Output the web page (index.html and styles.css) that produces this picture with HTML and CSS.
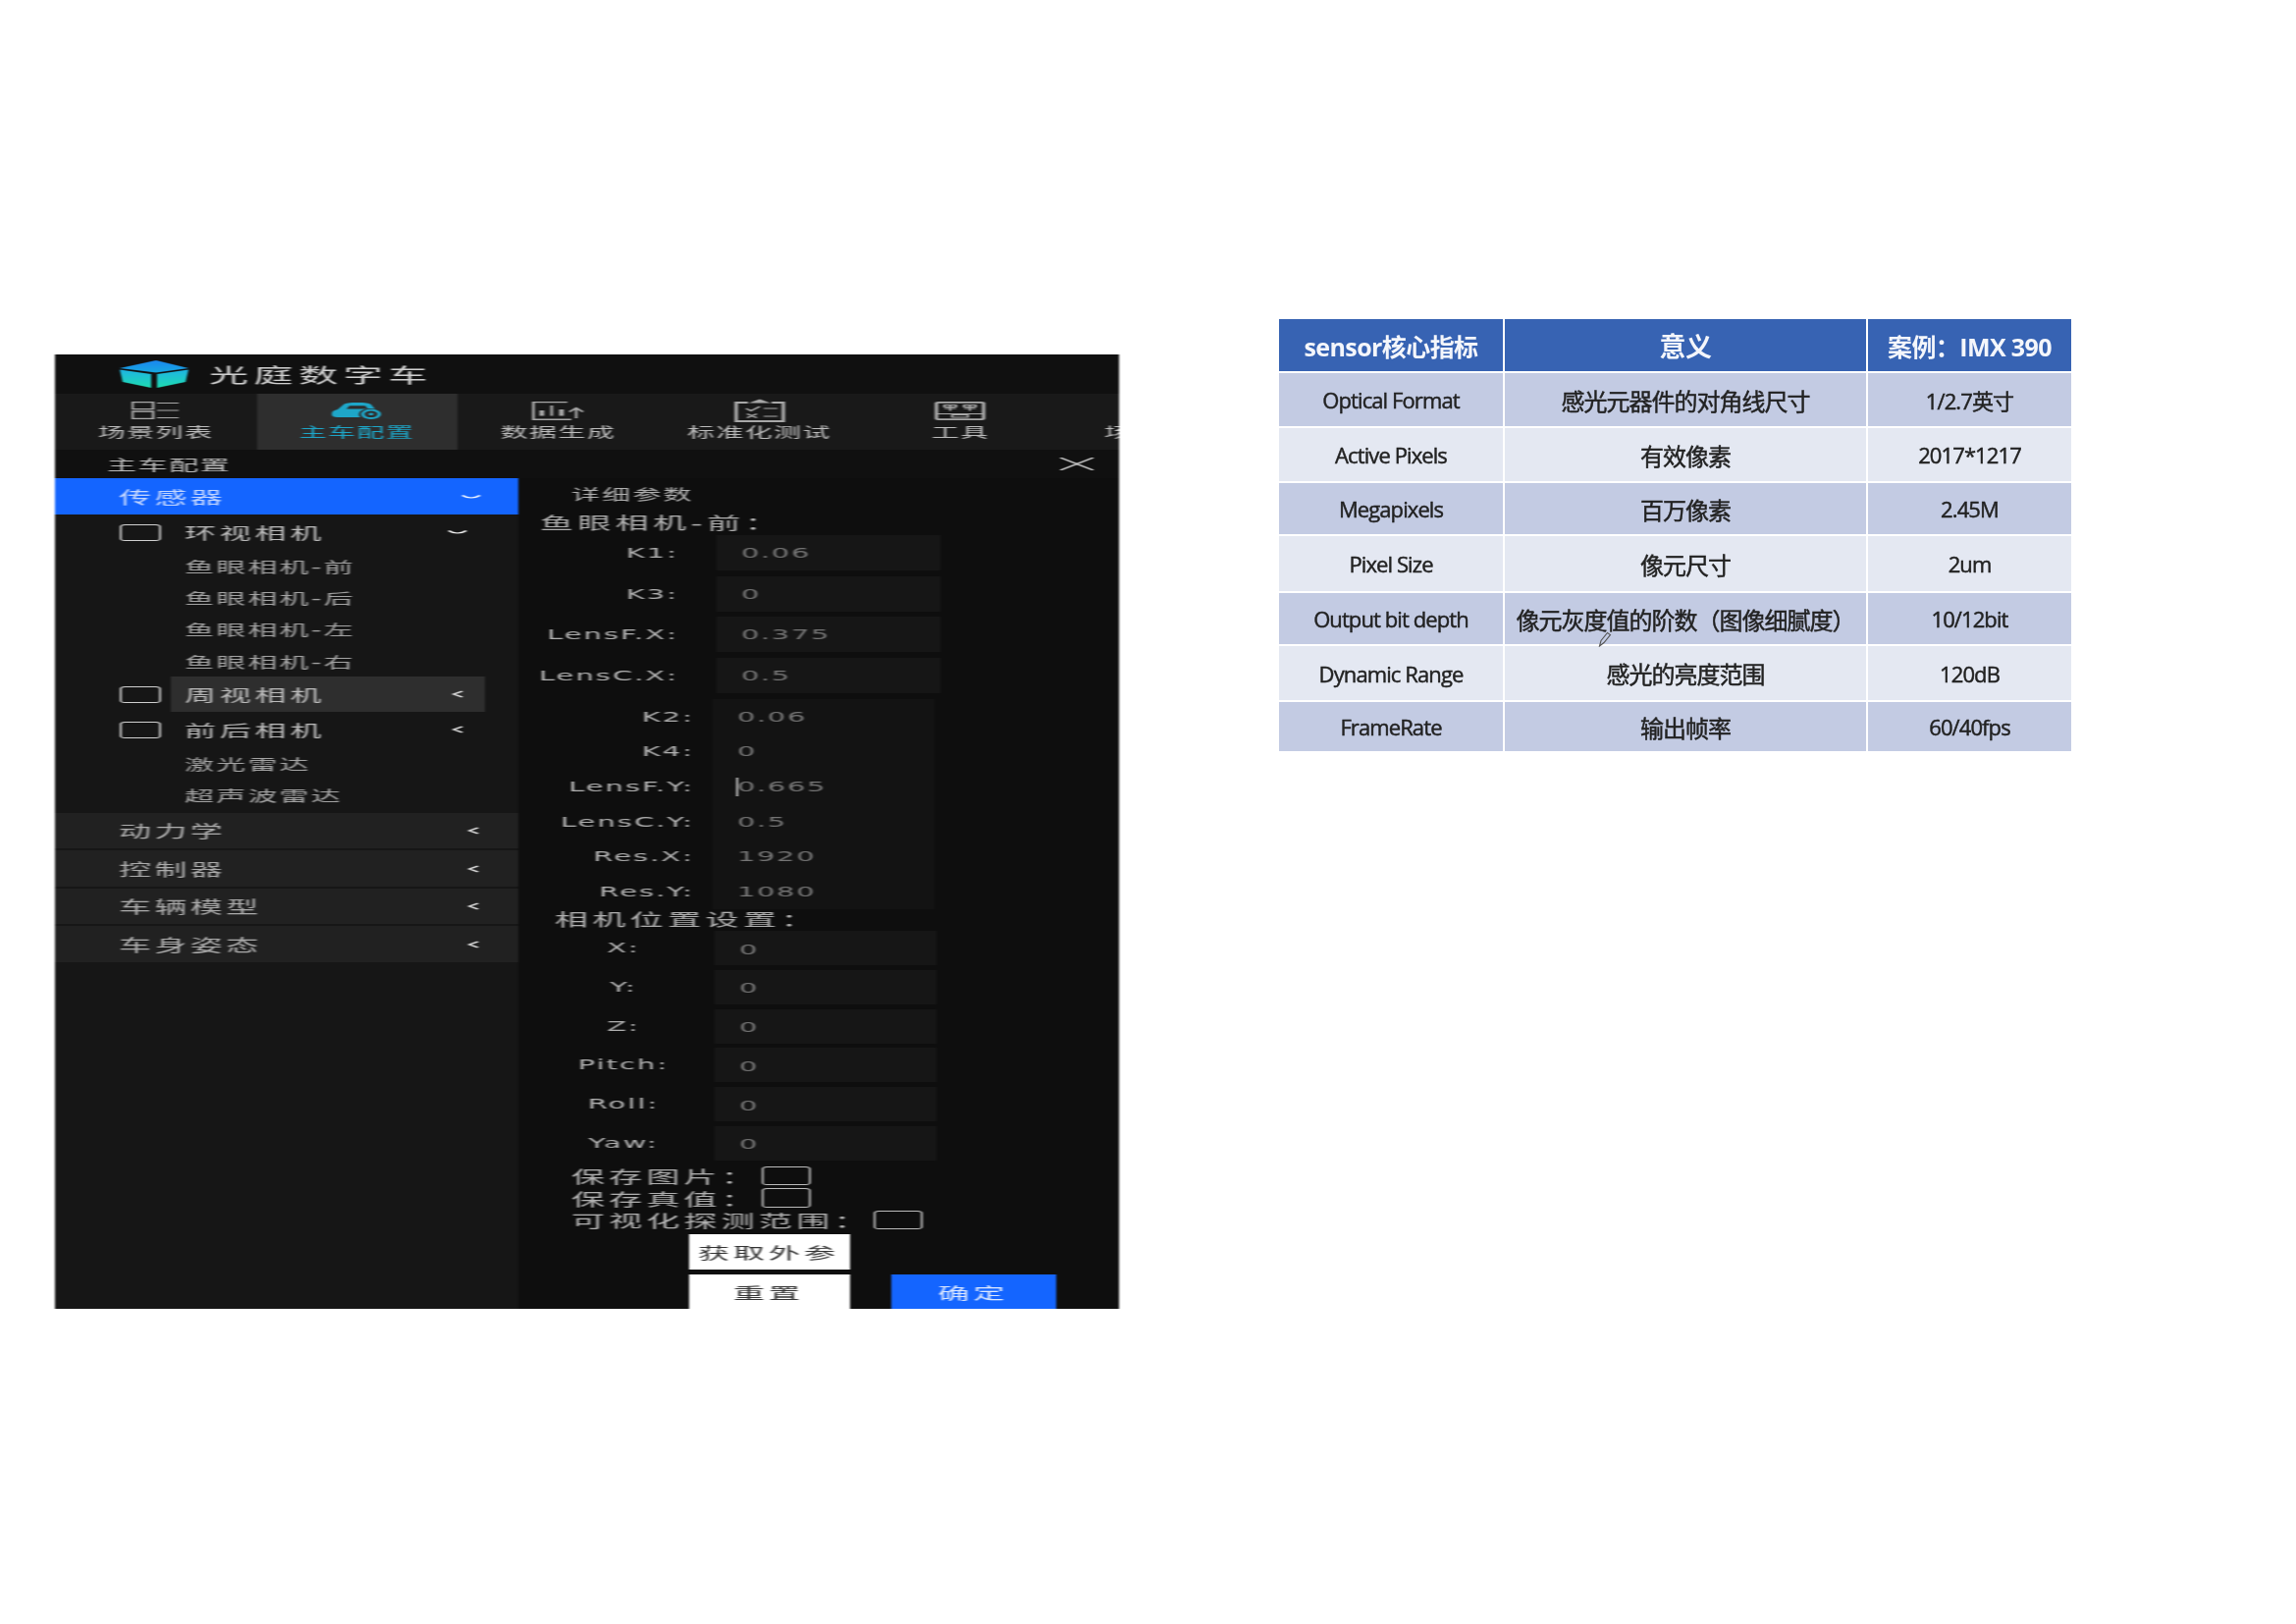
FILE: index.html
```html
<!DOCTYPE html>
<html lang="zh">
<head>
<meta charset="utf-8">
<title>光庭数字车</title>
<link rel="stylesheet" href="styles.css">
</head>
<body>
<div class="page">
  <div class="app-frame">
    <div class="app">
      <header class="title-bar">
        <svg class="logo" viewBox="0 0 35 28">
          <defs>
            <linearGradient id="tg" x1="0" y1="0" x2="0" y2="1"><stop offset="0" stop-color="#1eb4e4"/><stop offset="1" stop-color="#1edcb0"/></linearGradient>
            <linearGradient id="tt" x1="0" y1="0" x2="0" y2="1"><stop offset="0" stop-color="#1a86f0"/><stop offset="1" stop-color="#18a8e0"/></linearGradient>
          </defs>
          <path d="M18.500 0L35 8 18.500 12.500 0 8Z" fill="url(#tt)"/>
          <path d="M0 9.500L16 14V28L1.500 22Z" fill="url(#tg)"/>
          <path d="M19 14L35 9.500 33.500 22 19 28Z" fill="url(#tg)"/>
        </svg>
        <span class="app-name">光庭数字车</span>
      </header>
      <nav class="nav">
        <div class="tab">
          <div class="tab-icon"><svg class="icon-list" viewBox="0 0 24 18" fill="none" stroke="#a8a8a8"><path d="M.5.5h10.500v7.200H.5zM.5 10h10.500v7.500H.5z" stroke-width="1.300"/><path d="M13 1.500h11M13 9h11M13 16.500h11"/></svg></div>
          <span class="tab-label">场景列表</span>
        </div>
        <div class="tab tab-active">
          <div class="tab-icon"><svg class="icon-car" viewBox="0 0 25 17"><path d="M0 12c0-3 1-4 3-5l3-5C7 .5 9 0 13 0s6 .5 7 2l2 4.500A6 6 0 0 0 14.500 15H3c-2 0-3-1-3-3z" fill="#1ea6c8"/><path d="M7.500 6.500L9 3.300h8l1.500 3.200z" fill="#2e2e2e"/><circle cx="20" cy="11.800" r="4.200" fill="#2e2e2e" stroke="#1ea6c8" stroke-width="1.800"/><circle cx="20" cy="11.800" r="1.300" fill="#1ea6c8"/></svg></div>
          <span class="tab-label">主车配置</span>
        </div>
        <div class="tab">
          <div class="tab-icon"><svg class="icon-chart" viewBox="0 0 27 19" fill="none" stroke="#a8a8a8"><path d="M18 .5H.7v17.800H20" stroke-width="1.400"/><path d="M5 14.500V9M15 14.500V8" stroke-width="2.400"/><path d="M10 14.500V4" stroke-width="1.400"/><path d="M22.500 17V7M19 10.500L22.500 6.500 26 10.500" stroke-width="1.300"/></svg></div>
          <span class="tab-label">数据生成</span>
        </div>
        <div class="tab">
          <div class="tab-icon"><svg class="icon-clip" viewBox="0 0 26 24" fill="none" stroke="#a8a8a8"><path d="M7 4H1v19h24V4h-6" stroke-width="1.800"/><path d="M9 4l4-3 4 3z" fill="#a8a8a8"/><path d="M6 10l2.500 2.500L13 8M15 10h7M6.500 15.500l5 4M11.500 15.500l-5 4M15 18h7" stroke-width="1.100"/></svg></div>
          <span class="tab-label">标准化测试</span>
        </div>
        <div class="tab">
          <div class="tab-icon"><svg class="icon-tool" viewBox="0 0 26 19" fill="none" stroke="#a8a8a8"><rect x="1" y=".9" width="24" height="17.200" rx="1" stroke-width="1.800"/><path d="M1 12.500h24M9 13.500h8v2.500H9z" stroke-width="1.100"/><path d="M5 3.500h6v2H5zM5 7h6M8 3.500v6M15 3.500h6v2h-6zM15 7h6M18 3.500v6" stroke-width="1.100"/></svg></div>
          <span class="tab-label">工具</span>
        </div>
        <div class="tab">
          <div class="tab-icon"></div>
          <span class="tab-label">场景列表</span>
        </div>
      </nav>
      <div class="sub-header">
        <span>主车配置</span>
        <svg class="close" viewBox="0 0 17 13" fill="none" stroke="#d8d8d8" stroke-width="1.200"><path d="M0 0l17 13M17 0L0 13"/></svg>
      </div>
      <div class="main">
        <aside class="sidebar">
          <div class="head-row"><span>传感器</span><svg class="chev-down" viewBox="0 0 10 4" fill="none" stroke="#fff" stroke-width="1.200"><path d="M.5.500Q5 5.500 9.500.500"/></svg></div>
          <div class="sensor-row">
            <span class="box"></span>
            <div class="sensor-name sensor-open"><span>环视相机</span><svg class="chev-down" viewBox="0 0 10 4" fill="none" stroke="#fff" stroke-width="1.200"><path d="M.5.500Q5 5.500 9.500.500"/></svg></div>
          </div>
          <div class="leaf">鱼眼相机-前</div>
          <div class="leaf">鱼眼相机-后</div>
          <div class="leaf">鱼眼相机-左</div>
          <div class="leaf">鱼眼相机-右</div>
          <div class="sensor-row">
            <span class="box"></span>
            <div class="sensor-name sensor-hover"><span>周视相机</span><svg class="chev-left" viewBox="0 0 6 8" fill="none" stroke="#eee" stroke-width="1.300"><path d="M5.500 1L1 4l4.500 3"/></svg></div>
          </div>
          <div class="sensor-row">
            <span class="box"></span>
            <div class="sensor-name"><span>前后相机</span><svg class="chev-left" viewBox="0 0 6 8" fill="none" stroke="#eee" stroke-width="1.300"><path d="M5.500 1L1 4l4.500 3"/></svg></div>
          </div>
          <div class="leaf">激光雷达</div>
          <div class="leaf">超声波雷达</div>
          <div class="groups">
            <div class="group"><span>动力学</span><svg class="chev-left" viewBox="0 0 6 8" fill="none" stroke="#eee" stroke-width="1.300"><path d="M5.500 1L1 4l4.500 3"/></svg></div>
            <div class="group"><span>控制器</span><svg class="chev-left" viewBox="0 0 6 8" fill="none" stroke="#eee" stroke-width="1.300"><path d="M5.500 1L1 4l4.500 3"/></svg></div>
            <div class="group"><span>车辆模型</span><svg class="chev-left" viewBox="0 0 6 8" fill="none" stroke="#eee" stroke-width="1.300"><path d="M5.500 1L1 4l4.500 3"/></svg></div>
            <div class="group"><span>车身姿态</span><svg class="chev-left" viewBox="0 0 6 8" fill="none" stroke="#eee" stroke-width="1.300"><path d="M5.500 1L1 4l4.500 3"/></svg></div>
          </div>
        </aside>
        <section class="panel">
          <div class="panel-title">详细参数</div>
          <div class="section-title">鱼眼相机-前：</div>
          <div class="fields-a">
            <div class="field"><label>K1:</label><div class="input">0.06</div></div>
            <div class="field"><label>K3:</label><div class="input">0</div></div>
            <div class="field"><label>LensF.X:</label><div class="input">0.375</div></div>
            <div class="field"><label>LensC.X:</label><div class="input">0.5</div></div>
          </div>
          <div class="fields-b">
            <div class="field"><label>K2:</label><div class="value">0.06</div></div>
            <div class="field"><label>K4:</label><div class="value">0</div></div>
            <div class="field"><label>LensF.Y:</label><div class="value value-caret">0.665</div></div>
            <div class="field"><label>LensC.Y:</label><div class="value">0.5</div></div>
            <div class="field"><label>Res.X:</label><div class="value">1920</div></div>
            <div class="field"><label>Res.Y:</label><div class="value">1080</div></div>
          </div>
          <div class="section-title section-pos">相机位置设置：</div>
          <div class="fields-c">
            <div class="field"><label>X:</label><div class="input">0</div></div>
            <div class="field"><label>Y:</label><div class="input">0</div></div>
            <div class="field"><label>Z:</label><div class="input">0</div></div>
            <div class="field"><label>Pitch:</label><div class="input">0</div></div>
            <div class="field"><label>Roll:</label><div class="input">0</div></div>
            <div class="field"><label>Yaw:</label><div class="input">0</div></div>
          </div>
          <div class="checks">
            <div class="check"><span>保存图片：</span><span class="box box-check"></span></div>
            <div class="check"><span>保存真值：</span><span class="box box-check"></span></div>
            <div class="check"><span>可视化探测范围：</span><span class="box box-check"></span></div>
          </div>
          <div class="actions">
            <div class="btn btn-wide">获取外参</div>
            <div class="action-row">
              <div class="btn">重置</div>
              <div class="btn btn-primary">确定</div>
            </div>
          </div>
        </section>
      </div>
    </div>
  </div>
  <div class="table-wrap">
    <div class="spec-table">
      <div class="cell head">sensor核心指标</div><div class="cell head head-big">意义</div><div class="cell head">案例：IMX 390</div>
      <div class="cell odd">Optical Format</div><div class="cell odd cjk">感光元器件的对角线尺寸</div><div class="cell odd">1/2.7英寸</div>
      <div class="cell even">Active Pixels</div><div class="cell even cjk">有效像素</div><div class="cell even">2017*1217</div>
      <div class="cell odd">Megapixels</div><div class="cell odd cjk">百万像素</div><div class="cell odd">2.45M</div>
      <div class="cell even">Pixel Size</div><div class="cell even cjk">像元尺寸</div><div class="cell even">2um</div>
      <div class="cell odd">Output bit depth</div><div class="cell odd cjk">像元灰度值的阶数（图像细腻度）</div><div class="cell odd">10/12bit</div>
      <div class="cell even">Dynamic Range</div><div class="cell even cjk">感光的亮度范围</div><div class="cell even">120dB</div>
      <div class="cell odd">FrameRate</div><div class="cell odd cjk">输出帧率</div><div class="cell odd">60/40fps</div>
    </div>
    <svg class="pen" viewBox="0 0 14 16" fill="none" stroke="#555" stroke-width="1.100"><path d="M1.500 15L3 9.500 9.500 1.500 12.500 3.500 6 11.500Z"/></svg>
  </div>
</div>
</body>
</html>
```

FILE: styles.css
```css
* { box-sizing: border-box; }
html, body { margin: 0; padding: 0; background: #fff; }

.page {
  display: flex;
  align-items: flex-start;
  width: 2339px;
  height: 1654px;
  padding: 325px 0 0 56px;
  gap: 163px;
  overflow: hidden;
}

/* The app capture is stretched to twice its width, so it is laid out at half width. */
.app-frame { width: 1084px; height: 972px; margin-top: 36px; flex: none; }
.app {
  width: 542px;
  height: 972px;
  display: flex;
  flex-direction: column;
  overflow: hidden;
  transform: scaleX(2);
  transform-origin: left top;
  filter: blur(.55px);
  background: #101010;
  color: #bcbcbc;
  font-family: "DejaVu Sans", "Noto Sans CJK SC", sans-serif;
}

.title-bar { height: 40px; display: flex; align-items: center; padding-left: 32.5px; flex: none; }
.logo { width: 35px; height: 28px; margin-right: 11px; }
.app-name { font-size: 20px; letter-spacing: 2.800px; color: #d0d0d0; }

.nav { height: 57px; display: flex; background: #191919; flex: none; }
.tab { width: 102.5px; flex: none; display: flex; flex-direction: column; align-items: center; }
.tab-active { background: #2e2e2e; color: #1ea6c8; }
.tab-icon { height: 30px; display: flex; align-items: center; justify-content: center; padding-top: 4px; }
.tab-label { font-size: 14px; letter-spacing: .7px; line-height: 18px; white-space: nowrap; }
.icon-list { width: 24px; height: 18px; }
.icon-car { width: 25px; height: 17px; }
.icon-chart { width: 27px; height: 19px; }
.icon-clip { width: 26px; height: 24px; }
.icon-tool { width: 26px; height: 19px; }

.sub-header {
  height: 29px;
  flex: none;
  display: flex;
  align-items: center;
  justify-content: space-between;
  padding: 0 13.5px 0 26.5px;
  font-size: 15px;
  letter-spacing: .8px;
}
.close { width: 17px; height: 13px; }

.main { flex: 1; display: flex; min-height: 0; }

.sidebar { width: 236px; flex: none; background: #161616; }
.head-row {
  height: 37px;
  display: flex;
  align-items: center;
  justify-content: space-between;
  padding: 0 19px 0 32.5px;
  background: #1465ff;
  color: #c6d8ff;
  font-size: 16.500px;
  letter-spacing: 1.700px;
}
.chev-down { width: 10px; height: 4px; }
.chev-left { width: 6px; height: 8px; }

.sensor-row { height: 36px; display: flex; align-items: center; padding-left: 32.5px; font-size: 16px; letter-spacing: 1.900px; }
.box { display: block; width: 21px; height: 17px; border: 1.200px solid #d0d0d0; border-radius: 2.500px; flex: none; }
.sensor-name {
  width: 160px;
  height: 36px;
  margin-left: 5.500px;
  display: flex;
  align-items: center;
  justify-content: space-between;
  padding: 0 11px 0 7px;
}
.sensor-open { padding-right: 9px; }
.sensor-hover { background: #2e2e2e; }
.leaf { height: 32.300px; display: flex; align-items: center; padding-left: 66px; font-size: 15px; letter-spacing: 1.100px; color: #a4a4a4; }

.groups { margin-top: 2px; display: flex; flex-direction: column; gap: 2px; }
.group {
  height: 36.500px;
  display: flex;
  align-items: center;
  justify-content: space-between;
  padding: 0 20px 0 32.500px;
  background: #212121;
  font-size: 16.500px;
  letter-spacing: 1.700px;
  color: #acacac;
}

.panel { flex: 1; background: #0e0e0e; display: flex; flex-direction: column; color: #b0b0b0; }
.panel-title { height: 30px; display: flex; align-items: center; padding-left: 27px; font-size: 14.500px; letter-spacing: 1.100px; flex: none; }
.section-title { height: 28px; display: flex; align-items: center; padding-left: 11px; font-size: 17px; letter-spacing: 2.200px; flex: none; }
.section-pos { height: 22px; padding: 0 0 4px 18.500px; }

.field { display: flex; align-items: center; }
.field label { font-size: 14.500px; letter-spacing: 1px; white-space: nowrap; }
.input { background: #161616; color: #757575; font-size: 14.500px; letter-spacing: .8px; display: flex; align-items: center; padding-left: 12.500px; }

.fields-a { display: flex; flex-direction: column; gap: 5.500px; flex: none; }
.fields-a .field label { width: 81.500px; text-align: right; }
.fields-a .input { width: 113.500px; height: 36px; margin-left: 19.500px; }

.fields-b { margin: 6.500px 0 0 99px; width: 113px; height: 214px; background: #131313; flex: none; display: flex; flex-direction: column; position: relative; }
.fields-b .field { height: 35.660px; }
.fields-b .field label { position: absolute; right: 122.500px; }
.value { padding-left: 12.500px; color: #757575; font-size: 14.500px; letter-spacing: .8px; }
.value-caret { position: relative; }
.value-caret::before { content: ""; position: absolute; left: 12px; top: -1px; width: 1px; height: 19px; background: #c8c8c8; }

.fields-c { display: flex; flex-direction: column; gap: 4.800px; flex: none; }
.fields-c .field { align-items: flex-start; }
.fields-c .field label { width: 100px; padding: 9px 0 0 7px; text-align: center; }
.fields-c .input { width: 112.500px; height: 35px; padding-top: 2px; }

.checks { margin: 6px 0 0 27px; display: flex; flex-direction: column; gap: 3px; flex: none; }
.check { height: 19.500px; display: flex; align-items: center; font-size: 17px; letter-spacing: 2.100px; white-space: nowrap; }
.box-check { width: 25px; height: 19.500px; margin-left: 1px; border-color: #bbb; }

.actions { margin: 5px 0 0 86.500px; display: flex; flex-direction: column; gap: 5px; flex: none; }
.action-row { display: flex; gap: 21.500px; }
.btn { width: 82px; height: 36px; background: #fff; color: #333; font-size: 16px; letter-spacing: 2px; display: flex; align-items: center; justify-content: center; flex: none; }
.btn-primary { width: 83.500px; background: #1465ff; color: #dce8ff; }

/* Table capture */
.table-wrap { position: relative; flex: none; width: 807px; filter: blur(.65px); }
.spec-table {
  display: grid;
  grid-template-columns: 228px 368px 207px;
  grid-template-rows: 53px 54px 54px 52px 56px 52px 55px 50px;
  column-gap: 2px;
  row-gap: 2px;
  font-family: "Open Sans", "Noto Sans CJK SC", sans-serif;
  font-size: 22px;
  color: #222;
}
.cell { display: flex; align-items: center; justify-content: center; white-space: nowrap; letter-spacing: -.9px; -webkit-text-stroke: .45px #222; }
.cjk { font-size: 24px; letter-spacing: -1px; }
.head { background: #3763b3; color: #f4f6fb; font-size: 25px; font-weight: 700; letter-spacing: -.6px; -webkit-text-stroke: 0; }
.head-big { font-size: 27px; }
.odd { background: #c3cbe3; }
.even { background: #e4e8f2; }
.pen { position: absolute; left: 325px; top: 318px; width: 14px; height: 16px; }
```
